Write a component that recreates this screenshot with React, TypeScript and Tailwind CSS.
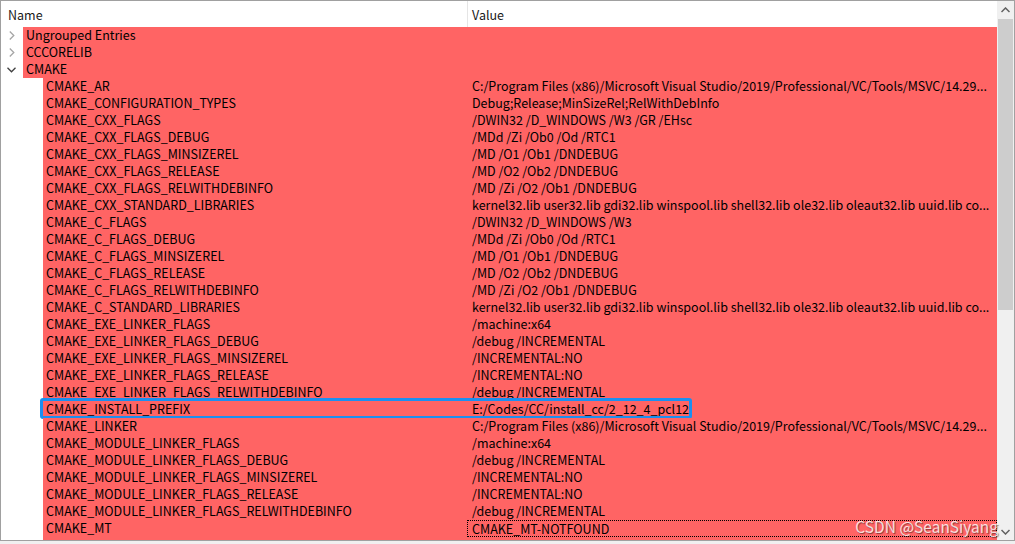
const font = { fontFamily: '"Noto Sans CJK SC", "Noto Sans", sans-serif' };

const groups = ["Ungrouped Entries", "CCCORELIB"];

const MSVC =
  "C:/Program Files (x86)/Microsoft Visual Studio/2019/Professional/VC/Tools/MSVC/14.29...";
const LIBS =
  "kernel32.lib user32.lib gdi32.lib winspool.lib shell32.lib ole32.lib oleaut32.lib uuid.lib co...";

const entries: [string, string][] = [
  ["CMAKE_AR", MSVC],
  ["CMAKE_CONFIGURATION_TYPES", "Debug;Release;MinSizeRel;RelWithDebInfo"],
  ["CMAKE_CXX_FLAGS", "/DWIN32 /D_WINDOWS /W3 /GR /EHsc"],
  ["CMAKE_CXX_FLAGS_DEBUG", "/MDd /Zi /Ob0 /Od /RTC1"],
  ["CMAKE_CXX_FLAGS_MINSIZEREL", "/MD /O1 /Ob1 /DNDEBUG"],
  ["CMAKE_CXX_FLAGS_RELEASE", "/MD /O2 /Ob2 /DNDEBUG"],
  ["CMAKE_CXX_FLAGS_RELWITHDEBINFO", "/MD /Zi /O2 /Ob1 /DNDEBUG"],
  ["CMAKE_CXX_STANDARD_LIBRARIES", LIBS],
  ["CMAKE_C_FLAGS", "/DWIN32 /D_WINDOWS /W3"],
  ["CMAKE_C_FLAGS_DEBUG", "/MDd /Zi /Ob0 /Od /RTC1"],
  ["CMAKE_C_FLAGS_MINSIZEREL", "/MD /O1 /Ob1 /DNDEBUG"],
  ["CMAKE_C_FLAGS_RELEASE", "/MD /O2 /Ob2 /DNDEBUG"],
  ["CMAKE_C_FLAGS_RELWITHDEBINFO", "/MD /Zi /O2 /Ob1 /DNDEBUG"],
  ["CMAKE_C_STANDARD_LIBRARIES", LIBS],
  ["CMAKE_EXE_LINKER_FLAGS", "/machine:x64"],
  ["CMAKE_EXE_LINKER_FLAGS_DEBUG", "/debug /INCREMENTAL"],
  ["CMAKE_EXE_LINKER_FLAGS_MINSIZEREL", "/INCREMENTAL:NO"],
  ["CMAKE_EXE_LINKER_FLAGS_RELEASE", "/INCREMENTAL:NO"],
  ["CMAKE_EXE_LINKER_FLAGS_RELWITHDEBINFO", "/debug /INCREMENTAL"],
  ["CMAKE_INSTALL_PREFIX", "E:/Codes/CC/install_cc/2_12_4_pcl12"],
  ["CMAKE_LINKER", MSVC],
  ["CMAKE_MODULE_LINKER_FLAGS", "/machine:x64"],
  ["CMAKE_MODULE_LINKER_FLAGS_DEBUG", "/debug /INCREMENTAL"],
  ["CMAKE_MODULE_LINKER_FLAGS_MINSIZEREL", "/INCREMENTAL:NO"],
  ["CMAKE_MODULE_LINKER_FLAGS_RELEASE", "/INCREMENTAL:NO"],
  ["CMAKE_MODULE_LINKER_FLAGS_RELWITHDEBINFO", "/debug /INCREMENTAL"],
  ["CMAKE_MT", "CMAKE_MT-NOTFOUND"],
];

function Chevron({ open }: { open?: boolean }) {
  return open ? (
    <svg width="9" height="6" viewBox="0 0 9 6" className="ml-[6px]">
      <path d="M0.5 0.8 L4.5 4.8 L8.5 0.8" fill="none" stroke="#404040" strokeWidth="1.3" />
    </svg>
  ) : (
    <svg width="6" height="9" viewBox="0 0 6 9" className="ml-[8px]">
      <path d="M0.8 0.5 L4.8 4.5 L0.8 8.5" fill="none" stroke="#a6a6a6" strokeWidth="1.3" />
    </svg>
  );
}

function GroupRow({ title, open }: { title: string; open?: boolean }) {
  return (
    <div className="flex h-[17px] shrink-0 items-center">
      <div className="flex w-[22px] items-center">
        <Chevron open={open} />
      </div>
      <div className="flex h-full flex-1 items-center bg-[#ff6464] pb-[2px] pl-[3px] text-black">{title}</div>
    </div>
  );
}

function EntryRow({ name, value }: { name: string; value: string }) {
  const highlight = name === "CMAKE_INSTALL_PREFIX";
  const focused = name === "CMAKE_MT";
  return (
    <div className="flex h-[17px] shrink-0">
      <div className="w-[42px] shrink-0" />
      <div className="relative flex h-full flex-1 items-center bg-[#ff6464] text-black">
        <div className="flex h-full w-[424px] shrink-0 items-center whitespace-nowrap pb-[2px] pl-[3px]">{name}</div>
        <div
          className={
            focused
              ? "flex h-full min-w-0 flex-1 items-center whitespace-nowrap border border-dotted border-black pb-[1px] pl-[4px]"
              : "flex h-full min-w-0 flex-1 items-center whitespace-nowrap pb-[2px] pl-[5px]"
          }
        >
          {value}
        </div>
        {highlight && (
          <div className="pointer-events-none absolute left-[-3px] top-[-3px] h-[21px] w-[652px] rounded-[3px] border-[3px] border-[#1b8ff0]" />
        )}
      </div>
    </div>
  );
}

export default function App() {
  return (
    <div className="h-[544px] w-[1015px] overflow-hidden bg-[#f0f0f0] text-[12.5px] leading-[15px]" style={font}>
      <div className="relative flex h-[541px] border border-[#a0a0a0] bg-white">
        <div className="flex min-w-0 flex-1 flex-col overflow-hidden">
          <div className="flex h-[26px] shrink-0 items-center text-[#1a1a1a]">
            <div className="w-[466px] pl-[7px]">Name</div>
            <div className="h-full w-px bg-[#e5e5e5]" />
            <div className="pl-[4px]">Value</div>
          </div>
          {groups.map((g) => (
            <GroupRow key={g} title={g} />
          ))}
          <GroupRow title="CMAKE" open />
          {entries.map(([n, v]) => (
            <EntryRow key={n} name={n} value={v} />
          ))}
          <div className="flex min-h-0 flex-1">
            <div className="w-[42px] shrink-0" />
            <div className="flex-1 bg-[#ff6464]" />
          </div>
        </div>
        <div className="flex w-[17px] shrink-0 flex-col bg-[#f0f0f0]">
          <div className="flex h-[18px] items-center justify-center">
            <svg width="9" height="6" viewBox="0 0 9 6">
              <path d="M0.5 5 L4.5 1 L8.5 5" fill="none" stroke="#606060" strokeWidth="1.5" />
            </svg>
          </div>
          <div className="mx-px h-[291px] bg-[#cdcdcd]" />
          <div className="flex-1" />
          <div className="flex h-[17px] items-center justify-center">
            <svg width="9" height="6" viewBox="0 0 9 6">
              <path d="M0.5 1 L4.5 5 L8.5 1" fill="none" stroke="#606060" strokeWidth="1.5" />
            </svg>
          </div>
        </div>
        <div
          className="pointer-events-none absolute bottom-[5px] right-[16px] text-[15.5px] leading-[18px] text-white/80"
          style={{ textShadow: "1px 1px 1px rgba(0,0,0,0.45)" }}
        >
          CSDN @SeanSiyang
        </div>
      </div>
    </div>
  );
}
